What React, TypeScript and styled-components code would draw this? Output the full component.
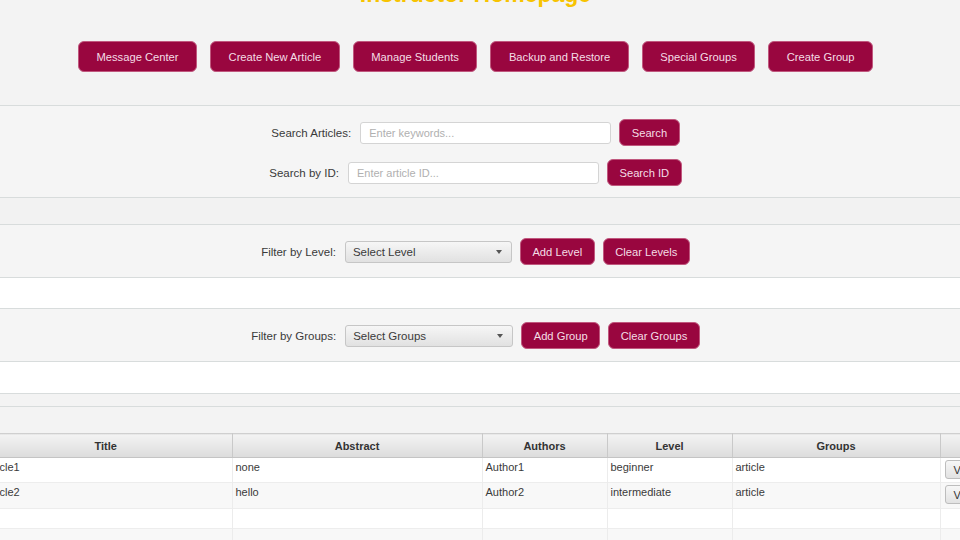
import React from "react";
import styled, { createGlobalStyle } from "styled-components";

const GlobalStyle = createGlobalStyle`
  html, body { margin: 0; padding: 0; background: #f3f3f3; overflow: hidden; }
  body { font-family: "Liberation Sans", Arial, Helvetica, sans-serif; color: #333; }
  * { box-sizing: border-box; }
`;

const Viewport = styled.div`
  width: 960px;
  height: 540px;
  overflow: hidden;
  background: #f3f3f3;
  display: flex;
  flex-direction: column;
`;

const Header = styled.header`
  display: flex;
  flex-direction: column;
  align-items: center;
  padding: 0 9px 33px 0;
  background: #f3f3f3;
  border-bottom: 1px solid #d8dcdc;
`;

const Title = styled.h1`
  margin: -18px 0 0;
  font-size: 23px;
  line-height: 24px;
  font-weight: bold;
  color: #f7c300;
`;

const NavBar = styled.nav`
  display: flex;
  gap: 13px;
  margin-top: 35px;
`;

const PrimaryButton = styled.button<{ $size?: "lg" | "sm" }>`
  height: ${(p) => (p.$size === "lg" ? "31px" : "27px")};
  padding: 0 ${(p) => (p.$size === "lg" ? "17.5px" : "11.5px")};
  border: 1px solid #c0587e;
  border-radius: 6px;
  background: #99063f;
  color: #f4dde5;
  font-family: "Liberation Sans", Arial, sans-serif;
  font-size: 11.2px;
  white-space: nowrap;
  cursor: pointer;
`;

const Band = styled.section<{ $h: number; $bg: string; $noLine?: boolean }>`
  flex: none;
  height: ${(p) => p.$h + (p.$noLine ? 0 : 1)}px;
  background: ${(p) => p.$bg};
  border-bottom: ${(p) => (p.$noLine ? "none" : "1px solid #d8dcdc")};
`;

const FormSection = styled.section<{ $pt: number; $pb: number }>`
  flex: none;
  display: flex;
  flex-direction: column;
  align-items: center;
  gap: 13px;
  padding: ${(p) => p.$pt}px 9px ${(p) => p.$pb}px 0;
  background: #f5f5f5;
  border-bottom: 1px solid #d8dcdc;
`;

const FieldRow = styled.div`
  display: flex;
  align-items: center;
  gap: 8px;
`;

const Label = styled.label`
  font-size: 11.5px;
  color: #3a3a3a;
  margin-right: 1px;
  white-space: nowrap;
`;

const TextInput = styled.input`
  width: 251px;
  height: 22px;
  padding: 0 8px;
  border: 1px solid #d4d4d4;
  border-radius: 3px;
  background: #fff;
  font-family: "Liberation Sans", Arial, sans-serif;
  font-size: 11px;
  color: #333;
  outline: none;
  &::placeholder { color: #b0b0b0; }
`;

const Combo = styled.div<{ $w: number }>`
  width: ${(p) => p.$w}px;
  height: 22px;
  display: flex;
  align-items: center;
  justify-content: space-between;
  padding: 0 9px 0 7px;
  border: 1px solid #c6c6c6;
  border-radius: 3px;
  background: linear-gradient(#f6f6f6, #e1e1e1);
  font-size: 11.5px;
  color: #3a3a3a;
`;

const Arrow = styled.span`
  width: 0;
  height: 0;
  border-left: 3.5px solid transparent;
  border-right: 3.5px solid transparent;
  border-top: 4px solid #555;
`;

const TableWrap = styled.div`
  flex: none;
  width: 1040px;
  margin-left: -20px;
  background: #fff;
`;

const Table = styled.table`
  width: 1040px;
  table-layout: fixed;
  border-collapse: collapse;
  font-size: 11px;
`;

const HeadCell = styled.th`
  height: 24px;
  padding: 0;
  font-weight: bold;
  font-size: 11px;
  color: #333;
  text-align: center;
  background: linear-gradient(#f3f3f3, #dcdcdc);
  border-right: 1px solid #c9c9c9;
  border-top: 1px solid #cfcfcf;
  border-bottom: 1px solid #c4c4c4;
`;

const Row = styled.tr<{ $h: number; $alt?: boolean }>`
  height: ${(p) => p.$h}px;
  background: ${(p) => (p.$alt ? "#f8f8f8" : "#ffffff")};
  border-bottom: 1px solid #ededed;
`;

const Cell = styled.td`
  padding: 3px 2px 0 3px;
  vertical-align: top;
  color: #3a3a3a;
  white-space: nowrap;
  overflow: hidden;
  border-right: 1px solid #ececec;
`;

const ViewButton = styled.button`
  height: 19px;
  margin: -1px 0 0 1px;
  padding: 0 8px;
  border: 1px solid #bdbdbd;
  border-radius: 3px;
  background: linear-gradient(#f7f7f7, #e2e2e2);
  font-family: "Liberation Sans", Arial, sans-serif;
  font-size: 11px;
  color: #333;
`;

const navItems = [
  "Message Center",
  "Create New Article",
  "Manage Students",
  "Backup and Restore",
  "Special Groups",
  "Create Group",
];

const columns = [
  { name: "Title", w: 252 },
  { name: "Abstract", w: 250 },
  { name: "Authors", w: 125 },
  { name: "Level", w: 125 },
  { name: "Groups", w: 208 },
  { name: "", w: 80 },
];

const articles = [
  { title: "Article1", abstract: "none", authors: "Author1", level: "beginner", groups: "article" },
  { title: "Article2", abstract: "hello", authors: "Author2", level: "intermediate", groups: "article" },
];

export default function App() {
  return (
    <>
      <GlobalStyle />
      <Viewport>
        <Header>
          <Title>Instructor Homepage</Title>
          <NavBar>
            {navItems.map((n) => (
              <PrimaryButton key={n} $size="lg">{n}</PrimaryButton>
            ))}
          </NavBar>
        </Header>

        <FormSection $pt={13} $pb={11}>
          <FieldRow>
            <Label>Search Articles:</Label>
            <TextInput placeholder="Enter keywords..." />
            <PrimaryButton>Search</PrimaryButton>
          </FieldRow>
          <FieldRow>
            <Label>Search by ID:</Label>
            <TextInput placeholder="Enter article ID..." />
            <PrimaryButton>Search ID</PrimaryButton>
          </FieldRow>
        </FormSection>

        <Band $h={26} $bg="#f2f2f2" />

        <FormSection $pt={13} $pb={12}>
          <FieldRow>
            <Label>Filter by Level:</Label>
            <Combo $w={167}>
              <span>Select Level</span>
              <Arrow />
            </Combo>
            <PrimaryButton>Add Level</PrimaryButton>
            <PrimaryButton>Clear Levels</PrimaryButton>
          </FieldRow>
        </FormSection>

        <Band $h={30} $bg="#ffffff" />

        <FormSection $pt={13} $pb={12}>
          <FieldRow>
            <Label>Filter by Groups:</Label>
            <Combo $w={168}>
              <span>Select Groups</span>
              <Arrow />
            </Combo>
            <PrimaryButton>Add Group</PrimaryButton>
            <PrimaryButton>Clear Groups</PrimaryButton>
          </FieldRow>
        </FormSection>

        <Band $h={31} $bg="#ffffff" />
        <Band $h={12} $bg="#f3f3f3" />
        <Band $h={26} $bg="#f3f3f3" $noLine />

        <TableWrap>
          <Table>
            <colgroup>
              {columns.map((c, i) => (
                <col key={i} style={{ width: c.w }} />
              ))}
            </colgroup>
            <thead>
              <tr>
                {columns.map((c, i) => (
                  <HeadCell key={i}>{c.name}</HeadCell>
                ))}
              </tr>
            </thead>
            <tbody>
              {articles.map((a, i) => (
                <Row key={a.title} $h={i === 0 ? 25 : 26} $alt={i % 2 === 1}>
                  <Cell>{a.title}</Cell>
                  <Cell>{a.abstract}</Cell>
                  <Cell>{a.authors}</Cell>
                  <Cell>{a.level}</Cell>
                  <Cell>{a.groups}</Cell>
                  <Cell>
                    <ViewButton>View</ViewButton>
                  </Cell>
                </Row>
              ))}
              <Row $h={20}>
                {columns.map((_, i) => <Cell key={i} />)}
              </Row>
              <Row $h={20} $alt>
                {columns.map((_, i) => <Cell key={i} />)}
              </Row>
            </tbody>
          </Table>
        </TableWrap>
      </Viewport>
    </>
  );
}
